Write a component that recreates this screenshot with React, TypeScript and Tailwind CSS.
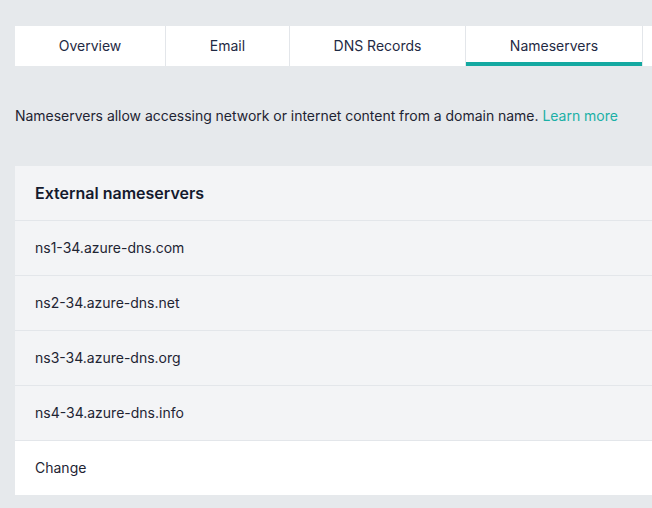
const tabs = [
  { label: "Overview", width: "w-[151px]" },
  { label: "Email", width: "w-[124px]" },
  { label: "DNS Records", width: "w-[176px]" },
  { label: "Nameservers", width: "w-[177px]", active: true },
];

const nameservers = [
  "ns1-34.azure-dns.com",
  "ns2-34.azure-dns.net",
  "ns3-34.azure-dns.org",
  "ns4-34.azure-dns.info",
];

export default function App() {
  return (
    <div className="min-h-[508px] w-[652px] overflow-hidden bg-[#e6e9ec] pl-[15px] pt-[26px] font-['Inter',sans-serif] text-[#1e2433]">
      {/* tab bar */}
      <div className="flex h-10 w-[660px] bg-white">
        {tabs.map((tab) => (
          <div
            key={tab.label}
            className={`relative flex ${tab.width} shrink-0 items-center justify-center border-r border-[#e3e6ea] text-sm text-[#1f2a44]`}
          >
            {tab.label}
            {tab.active && (
              <div className="absolute bottom-0 left-0 right-0 h-1 bg-[#14a9a1]" />
            )}
          </div>
        ))}
        <div className="flex-1" />
      </div>

      <p className="mt-[40px] text-sm leading-5 tracking-[-0.002em] text-[#1e2433]">
        Nameservers allow accessing network or internet content from a domain name.{" "}
        <span className="text-[#1bb0a6]">Learn more</span>
      </p>

      <div className="mt-[40px] w-[660px] divide-y divide-[#e3e6ea]">
        <div className="flex h-[55px] items-center bg-[#f3f4f6] pl-5 text-base font-semibold text-[#141a2e]">
          External nameservers
        </div>
        {nameservers.map((ns) => (
          <div
            key={ns}
            className="flex h-[55px] items-center bg-[#f3f4f6] pl-5 text-sm"
          >
            {ns}
          </div>
        ))}
        <div className="flex h-[54px] items-center bg-white pl-5 text-sm">
          Change
        </div>
      </div>
    </div>
  );
}
